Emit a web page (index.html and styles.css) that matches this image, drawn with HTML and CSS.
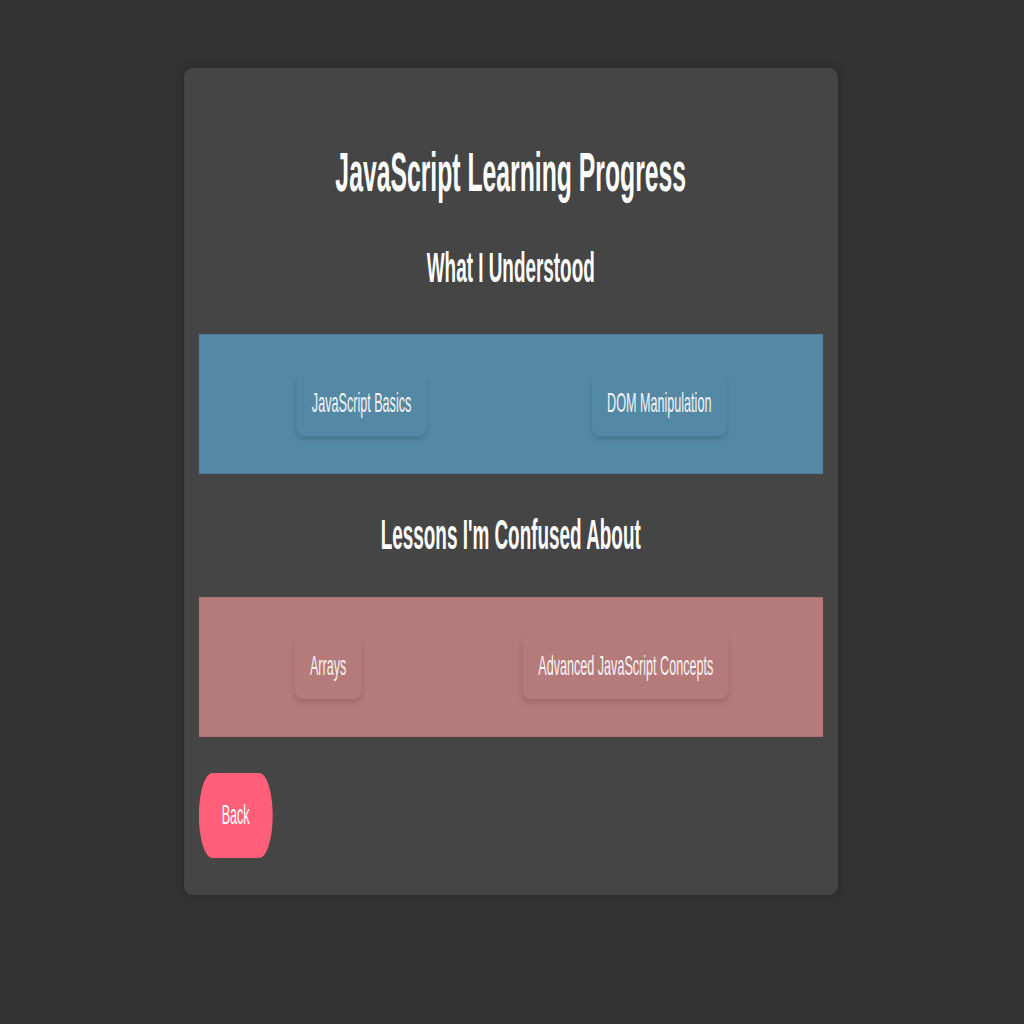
FILE: index.html
```html
<!DOCTYPE html>
<html lang="en">
<head>
<meta charset="utf-8">
<title>JavaScript Learning Progress</title>
<link rel="stylesheet" href="styles.css">
</head>
<body>
<div class="viewport">
  <div class="stage">
    <main class="card">
      <h1 class="title">JavaScript Learning Progress</h1>
      <h2 class="section-title">What I Understood</h2>
      <div class="panel panel-understood">
        <div class="chip">JavaScript Basics</div>
        <div class="chip">DOM Manipulation</div>
      </div>
      <h2 class="section-title second">Lessons I'm Confused About</h2>
      <div class="panel panel-confused">
        <div class="chip">Arrays</div>
        <div class="chip">Advanced JavaScript Concepts</div>
      </div>
      <div class="actions">
        <button class="back-btn" type="button">Back</button>
      </div>
    </main>
  </div>
</div>
</body>
</html>
```
FILE: styles.css
```css
html {
  background: #333333;
  overflow: hidden;
}
body {
  margin: 0;
  background: #333333;
  font-family: "Liberation Sans", Arial, sans-serif;
  color: #ffffff;
}
.viewport {
  width: 1024px;
  height: 1024px;
  overflow: hidden;
}
.stage {
  width: 2270px;
  transform: scaleX(0.45);
  transform-origin: 0 0;
  padding-top: 68px;
}
.card {
  width: 1453px;
  margin: 0 auto;
  box-sizing: border-box;
  padding: 20px 33px 37px;
  background: #454545;
  border-radius: 18px / 9px;
  box-shadow: 0 0 14px rgba(0, 0, 0, 0.25);
}
.title {
  margin: 53px 0 0;
  font-size: 55px;
  line-height: 1.15;
  font-weight: bold;
  text-align: center;
}
.section-title {
  margin: 40px 0 41px;
  font-size: 42px;
  line-height: 1.15;
  font-weight: bold;
  text-align: center;
}
.section-title.second {
  margin: 37px 0 38px;
}
.panel {
  height: 140px;
  box-sizing: border-box;
  padding: 0 30px 0 34px;
  display: flex;
  justify-content: space-around;
  align-items: center;
}
.panel-understood {
  background: #5489a6;
  box-shadow: inset 0 0 0 1px #4f7f99;
}
.panel-confused {
  background: #b57a7a;
  box-shadow: inset 0 0 0 1px #a87070;
}
.chip {
  padding: 16px 34px 17px;
  font-size: 28px;
  line-height: 32px;
  color: #f4f4f4;
  border-radius: 18px / 9px;
  box-shadow: 0 4px 8px rgba(0, 0, 0, 0.12);
}
.actions {
  margin-top: 36px;
  display: flex;
}
.back-btn {
  font-family: "Liberation Sans", Arial, sans-serif;
  font-size: 28px;
  line-height: 32px;
  padding: 26px 51px 27px;
  border: none;
  color: #ffffff;
  background: #ff5f78;
  border-radius: 30px / 43px;
}
```
